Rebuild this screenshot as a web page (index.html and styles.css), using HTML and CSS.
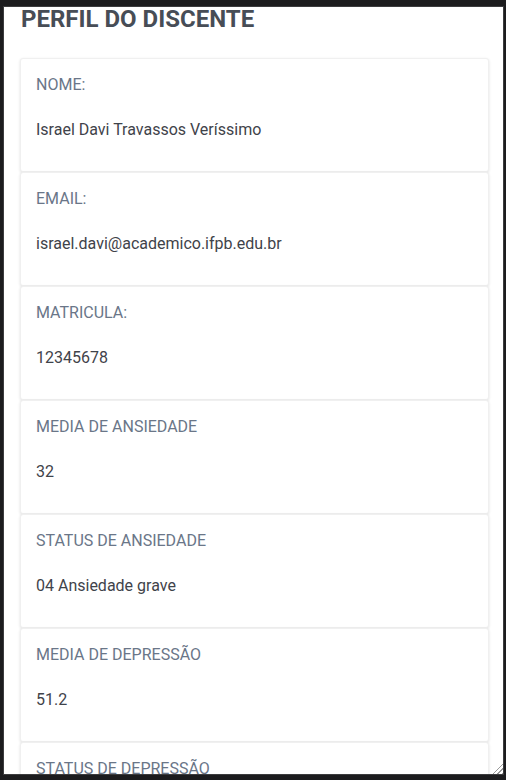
FILE: index.html
```html
<!DOCTYPE html>
<html lang="pt-BR">
<head>
<meta charset="utf-8">
<title>Perfil do Discente</title>
<link rel="stylesheet" href="styles.css">
</head>
<body>
<div class="frame">
  <main class="panel">
    <h1 class="title">PERFIL DO DISCENTE</h1>
    <section class="list">
      <div class="card"><p class="label">NOME:</p><p class="value">Israel Davi Travassos Veríssimo</p></div>
      <div class="card"><p class="label">EMAIL:</p><p class="value">israel.davi@academico.ifpb.edu.br</p></div>
      <div class="card"><p class="label">MATRICULA:</p><p class="value">12345678</p></div>
      <div class="card"><p class="label">MEDIA DE ANSIEDADE</p><p class="value">32</p></div>
      <div class="card"><p class="label">STATUS DE ANSIEDADE</p><p class="value">04 Ansiedade grave</p></div>
      <div class="card"><p class="label">MEDIA DE DEPRESSÃO</p><p class="value">51.2</p></div>
      <div class="card"><p class="label">STATUS DE DEPRESSÃO</p><p class="value">03 Depressão moderada</p></div>
    </section>
    <span class="grip" aria-hidden="true"></span>
  </main>
</div>
</body>
</html>
```

FILE: styles.css
```css
* { box-sizing: border-box; }
html, body { margin: 0; padding: 0; }
body {
  background: #1c1c1e;
  width: 506px;
  height: 780px;
  overflow: hidden;
  font-family: Roboto, "Liberation Sans", Arial, sans-serif;
}
.frame {
  padding: 6px 2px 5px 3px;
  height: 780px;
}
.panel {
  position: relative;
  height: 100%;
  background: #ffffff;
  border: 1px solid #3c3c3e;
  overflow: hidden;
  padding: 0 14px 0 16px;
}
.title {
  margin: 0 0 27px 1px;
  font-size: 24px;
  line-height: 24px;
  font-weight: 700;
  color: #474d56;
}
.list {
  display: flex;
  flex-direction: column;
}
.card {
  border: 1px solid #f0f0f0;
  border-radius: 3px;
  box-shadow: 0 1px 3px rgba(0, 0, 0, 0.12);
  padding: 16px 16px 0 15px;
  height: 114px;
  background: #fff;
}
.label {
  margin: 0 0 26px;
  font-size: 16px;
  line-height: 19px;
  color: #6a7688;
}
.value {
  margin: 0;
  font-size: 16px;
  line-height: 19px;
  color: #3f434a;
}
.grip {
  position: absolute;
  right: 0;
  bottom: 0;
  width: 13px;
  height: 13px;
  background: repeating-linear-gradient(135deg, transparent 0 2px, #9a9a9a 2px 3px);
  clip-path: polygon(100% 0, 100% 100%, 0 100%);
}
```
